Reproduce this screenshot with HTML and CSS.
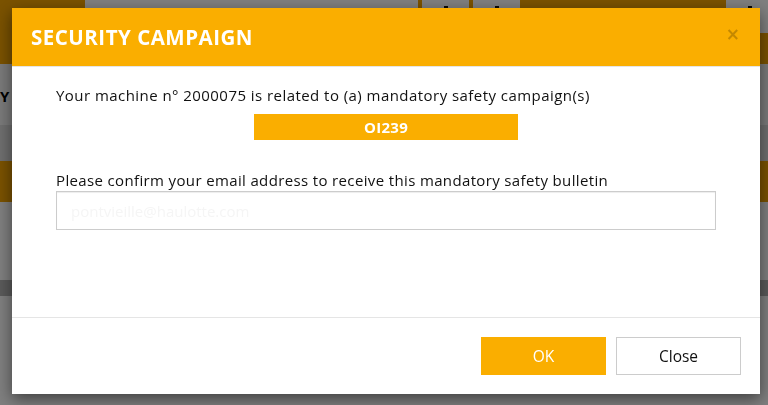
FILE: index.html
```html
<!DOCTYPE html>
<html lang="en">
<head>
<meta charset="utf-8">
<title>Security campaign</title>
<link rel="stylesheet" href="styles.css">
</head>
<body>
<div class="page">
  <div class="topbar">
    <div class="brand"></div>
    <div class="topbar-main">
      <div class="nav">
        <div class="nav-item nav-wide"></div>
        <div class="nav-item nav-small"><span class="dot"></span></div>
        <div class="nav-item nav-small"><span class="dot"></span></div>
        <div class="nav-accent"></div>
        <div class="nav-item nav-user"><span class="dot"></span></div>
      </div>
      <div class="subnav"></div>
    </div>
  </div>
  <div class="page-title">Y</div>
  <div class="filters"></div>
  <div class="table-head"></div>
  <div class="content"></div>
  <div class="band"></div>
  <div class="content-low"></div>
</div>

<div class="backdrop"></div>

<div class="modal" role="dialog">
  <div class="modal-header">
    <h4 class="modal-title">SECURITY CAMPAIGN</h4>
    <span class="modal-close">&times;</span>
  </div>
  <div class="modal-body">
    <p class="line line-first">Your machine n° 2000075 is related to (a) mandatory safety campaign(s)</p>
    <div class="campaign-tag">OI239</div>
    <label class="line label" for="email">Please confirm your email address to receive this mandatory safety bulletin</label>
    <input class="email" id="email" type="text" value="pontvieille@haulotte.com">
  </div>
  <div class="modal-footer">
    <button class="btn btn-ok">OK</button>
    <button class="btn btn-close">Close</button>
  </div>
</div>
</body>
</html>
```
FILE: styles.css
```css
html, body {
  margin: 0;
  padding: 0;
  background: #fff;
  font-family: "Open Sans", "Liberation Sans", sans-serif;
  overflow: hidden;
  height: 405px;
}

.page {
  display: flex;
  flex-direction: column;
}

.topbar {
  display: flex;
  height: 64px;
}
.brand {
  width: 85px;
  background: #f4a400;
}
.topbar-main {
  flex: 1;
  display: flex;
  flex-direction: column;
}
.nav {
  height: 33px;
  display: flex;
  gap: 4px;
  background: #f4a400;
}
.nav-item {
  background: #fff;
  position: relative;
}
.nav-wide { width: 333px; }
.nav-small { width: 47px; }
.nav-accent { width: 202px; background: #f4a400; margin-left: -4px; }
.nav-user { flex: 1; }
.dot {
  position: absolute;
  top: 6px;
  left: 22px;
  width: 4px;
  height: 2px;
  background: #111;
}
.subnav {
  flex: 1;
  background: #f4a400;
}

.page-title {
  height: 61px;
  line-height: 64px;
  font-weight: 700;
  font-size: 15px;
  color: #000;
  white-space: nowrap;
  background: #f5f5f5;
}
.filters {
  height: 36px;
  background: #dedede;
}
.table-head {
  height: 41px;
  background: #f4a400;
}
.content {
  height: 78px;
  background: #fff;
}
.band {
  height: 16px;
  background: #b4b4b4;
}
.content-low {
  height: 120px;
  background: #fff;
}

.backdrop {
  position: fixed;
  inset: 0;
  background: rgba(0, 0, 0, 0.5);
}

.modal {
  position: fixed;
  left: 12px;
  top: 8px;
  width: 748px;
  background: #fff;
  box-shadow: 0 5px 15px rgba(0, 0, 0, 0.5);
  display: flex;
  flex-direction: column;
}

.modal-header {
  height: 58px;
  background: #faae00;
  border-bottom: 1px solid #e5e5e5;
  display: flex;
  align-items: center;
  justify-content: space-between;
  padding: 0 20px 0 19px;
}
.modal-title {
  margin: 0;
  color: #fff;
  font-size: 20.5px;
  font-weight: 700;
  letter-spacing: 0.5px;
}
.modal-close {
  color: #c48800;
  font-size: 17px;
  font-weight: 700;
  line-height: 1;
  margin-bottom: 6px;
  font-family: "DejaVu Sans", sans-serif;
}

.modal-body {
  height: 250px;
  box-sizing: border-box;
  padding: 18px 44px 0;
  display: flex;
  flex-direction: column;
  align-items: flex-start;
}
.line {
  margin: 0;
  font-size: 15px;
  line-height: 20px;
  color: #111;
  letter-spacing: 0.36px;
}
.line-first {
  letter-spacing: 0.45px;
}
.campaign-tag {
  align-self: stretch;
  margin: 9px 198px 0 198px;
  height: 26px;
  line-height: 26px;
  background: #faae00;
  color: #fff;
  font-weight: 700;
  font-size: 15px;
  letter-spacing: 0.3px;
  text-align: center;
}
.label {
  margin-top: 30px;
}
.email {
  margin-top: 1px;
  width: 660px;
  height: 39px;
  box-sizing: border-box;
  border: 1px solid #ccc;
  box-shadow: inset 0 1px 1px rgba(0, 0, 0, 0.075);
  padding: 0 14px;
  font-family: inherit;
  font-size: 15px;
  color: #f5f5f5;
  background: #fff;
  outline: none;
}

.modal-footer {
  border-top: 1px solid #e5e5e5;
  padding: 19px;
  display: flex;
  justify-content: flex-end;
  gap: 10px;
}
.btn {
  width: 125px;
  height: 38px;
  box-sizing: border-box;
  font-family: inherit;
  font-size: 15.5px;
  cursor: pointer;
}
.btn-ok {
  background: #faae00;
  color: #fff;
  border: 1px solid #faae00;
}
.btn-close {
  background: #fff;
  color: #111;
  border: 1px solid #ccc;
}
```
